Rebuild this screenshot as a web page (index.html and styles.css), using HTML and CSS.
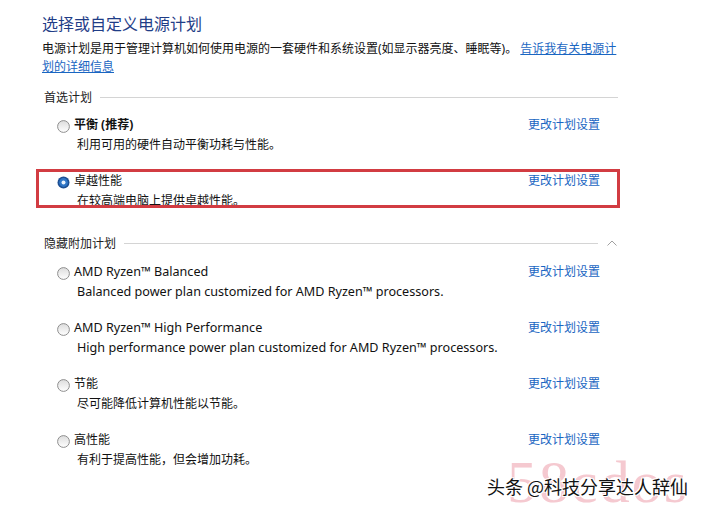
FILE: index.html
```html
<!DOCTYPE html>
<html lang="zh-CN">
<head>
<meta charset="utf-8">
<title>选择或自定义电源计划</title>
<link rel="stylesheet" href="styles.css">
</head>
<body>
<div class="page">
  <h1 class="title">选择或自定义电源计划</h1>
  <p class="intro">电源计划是用于管理计算机如何使用电源的一套硬件和系统设置(如显示器亮度、睡眠等)。 <a href="#" class="intro-link">告诉我有关电源计<br>划的详细信息</a></p>

  <section class="group group-first">
    <div class="group-head"><span class="group-name">首选计划</span><span class="rule"></span></div>
    <div class="plans">
      <div class="plan">
        <div class="plan-main">
          <div class="plan-label"><svg class="radio" viewBox="0 0 13 13" width="13" height="13"><defs><linearGradient id="rg" x1="0" y1="0" x2="0" y2="1"><stop offset="0" stop-color="#dcdcdc"/><stop offset="1" stop-color="#ffffff"/></linearGradient></defs><circle cx="6.5" cy="6.5" r="5.9" fill="url(#rg)" stroke="#8f8f8f" stroke-width="1"/></svg><b>平衡 (推荐)</b></div>
          <div class="plan-desc">利用可用的硬件自动平衡功耗与性能。</div>
        </div>
        <a href="#" class="plan-link">更改计划设置</a>
      </div>
      <div class="plan plan-marked">
        <div class="plan-main">
          <div class="plan-label"><svg class="radio" viewBox="0 0 13 13" width="13" height="13"><circle cx="6.5" cy="6.5" r="6" fill="#1d4f93"/><circle cx="6.5" cy="6.5" r="4.4" fill="#2f76c6"/><circle cx="6.5" cy="6.5" r="2" fill="#eaf3fd"/></svg>卓越性能</div>
          <div class="plan-desc">在较高端电脑上提供卓越性能。</div>
        </div>
        <a href="#" class="plan-link">更改计划设置</a>
        <div class="highlight"></div>
      </div>
    </div>
  </section>

  <section class="group group-second">
    <div class="group-head"><span class="group-name">隐藏附加计划</span><span class="rule"></span><svg class="chevron" viewBox="0 0 10 6" width="10" height="6"><polyline points="0.5,5.5 5,1 9.5,5.5" fill="none" stroke="#a0a0a0" stroke-width="1"/></svg></div>
    <div class="plans">
      <div class="plan">
        <div class="plan-main">
          <div class="plan-label en"><svg class="radio" viewBox="0 0 13 13" width="13" height="13"><circle cx="6.5" cy="6.5" r="5.9" fill="url(#rg)" stroke="#8f8f8f" stroke-width="1"/></svg>AMD Ryzen™ Balanced</div>
          <div class="plan-desc en">Balanced power plan customized for AMD Ryzen™ processors.</div>
        </div>
        <a href="#" class="plan-link">更改计划设置</a>
      </div>
      <div class="plan">
        <div class="plan-main">
          <div class="plan-label en"><svg class="radio" viewBox="0 0 13 13" width="13" height="13"><circle cx="6.5" cy="6.5" r="5.9" fill="url(#rg)" stroke="#8f8f8f" stroke-width="1"/></svg>AMD Ryzen™ High Performance</div>
          <div class="plan-desc en">High performance power plan customized for AMD Ryzen™ processors.</div>
        </div>
        <a href="#" class="plan-link">更改计划设置</a>
      </div>
      <div class="plan">
        <div class="plan-main">
          <div class="plan-label"><svg class="radio" viewBox="0 0 13 13" width="13" height="13"><circle cx="6.5" cy="6.5" r="5.9" fill="url(#rg)" stroke="#8f8f8f" stroke-width="1"/></svg>节能</div>
          <div class="plan-desc">尽可能降低计算机性能以节能。</div>
        </div>
        <a href="#" class="plan-link">更改计划设置</a>
      </div>
      <div class="plan">
        <div class="plan-main">
          <div class="plan-label"><svg class="radio" viewBox="0 0 13 13" width="13" height="13"><circle cx="6.5" cy="6.5" r="5.9" fill="url(#rg)" stroke="#8f8f8f" stroke-width="1"/></svg>高性能</div>
          <div class="plan-desc">有利于提高性能，但会增加功耗。</div>
        </div>
        <a href="#" class="plan-link">更改计划设置</a>
      </div>
    </div>
  </section>
</div>

<div class="watermark">
  <span class="wm-site">58cdos</span>
  <span class="wm-credit">头条 @科技分享达人辞仙</span>
</div>
</body>
</html>
```

FILE: styles.css
```css
html, body {
  margin: 0;
  padding: 0;
  background: #ffffff;
}

body {
  width: 703px;
  height: 509px;
  overflow: hidden;
  position: relative;
  font-family: "Noto Sans", "Noto Sans CJK SC", sans-serif;
  font-size: 12px;
  color: #111111;
}

.page {
  width: 576px;
  padding: 14px 0 0 42px;
}

.title {
  margin: 0;
  font-size: 16px;
  line-height: 20px;
  font-weight: normal;
  color: #1f3d87;
}

.intro {
  margin: 6px 0 0;
  line-height: 18px;
  white-space: nowrap;
}

.intro-link {
  color: #1a66c2;
  text-decoration: underline;
}

.group-first {
  margin-top: 11px;
}

.group-second {
  margin-top: 22px;
}

.group-head {
  display: flex;
  align-items: center;
  gap: 8px;
  height: 20px;
  padding-left: 2px;
  margin-bottom: 8px;
  color: #222222;
}

.group-second .group-head {
  margin-bottom: 9px;
}

.rule {
  flex: 1;
  height: 1px;
  background: #d4d4d4;
}

.chevron {
  margin-left: 1px;
  margin-right: 1px;
}

.plans {
  display: flex;
  flex-direction: column;
  gap: 16px;
}

.plan {
  position: relative;
  display: grid;
  grid-template-columns: 1fr 90px;
  padding-left: 15px;
}

.plan-label {
  display: flex;
  align-items: center;
  gap: 4px;
  line-height: 20px;
  height: 20px;
}

.plan-label b {
  font-weight: bold;
}

.radio {
  flex: none;
  position: relative;
  top: 1px;
}

.plan-desc {
  padding-left: 20px;
  line-height: 20px;
  height: 20px;
  white-space: nowrap;
}

.en {
  font-size: 12.6px;
}

.plan-link {
  line-height: 20px;
  color: #1a66c2;
  text-decoration: none;
}

.highlight {
  position: absolute;
  left: -6px;
  right: -2px;
  top: -2px;
  height: 39px;
  border: 3px solid #d23c42;
  box-sizing: border-box;
  pointer-events: none;
}

.watermark {
  position: absolute;
  left: 486px;
  top: 457px;
  width: 214px;
  height: 52px;
}

.wm-site {
  position: absolute;
  left: 21px;
  top: 0;
  font-family: "Liberation Serif", serif;
  font-size: 60px;
  line-height: 50px;
  letter-spacing: 2px;
  color: #f5c9d0;
}

.wm-credit {
  position: absolute;
  left: 1px;
  top: 18px;
  font-family: "Noto Sans CJK SC", sans-serif;
  font-size: 18px;
  line-height: 22px;
  color: #111111;
  white-space: nowrap;
  text-shadow: 1px 1px 0 #ffffff, -1px -1px 0 #ffffff, 1px -1px 0 #ffffff, -1px 1px 0 #ffffff;
}
```
